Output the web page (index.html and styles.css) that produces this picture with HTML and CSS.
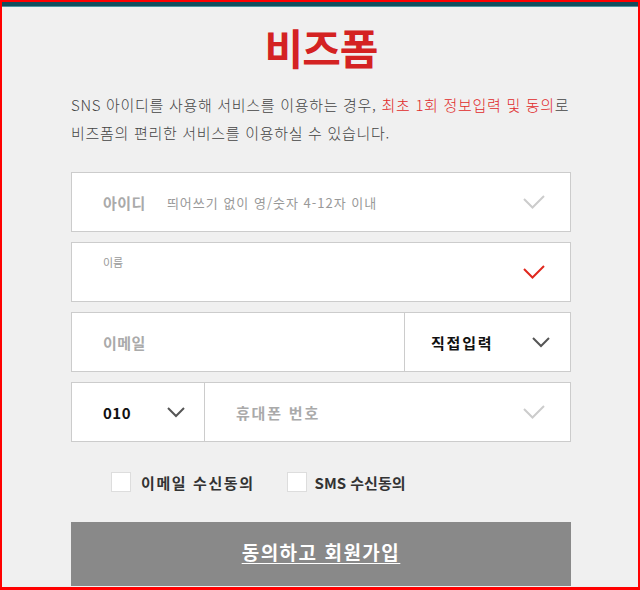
FILE: index.html
```html
<!DOCTYPE html>
<html lang="ko">
<head>
<meta charset="utf-8">
<title>비즈폼 회원가입</title>
<link rel="stylesheet" href="styles.css">
</head>
<body>
<div class="topbar"></div>
<main class="page">
  <h1 class="logo">비즈폼</h1>
  <p class="intro">
    <span class="line">SNS 아이디를 사용해 서비스를 이용하는 경우, <em>최초 1회 정보입력 및 동의</em>로</span>
    <span class="line">비즈폼의 편리한 서비스를 이용하실 수 있습니다.</span>
  </p>

  <div class="field">
    <span class="label">아이디</span>
    <span class="hint">띄어쓰기 없이 영/숫자 4-12자 이내</span>
    <svg class="check" width="22" height="15" viewBox="0 0 22 15"><path d="M1 4 L9.5 12.5 L21 1" fill="none" stroke="#cccccc" stroke-width="2"/></svg>
  </div>

  <div class="field field-filled">
    <span class="small-label">이름</span>
    <svg class="check" width="22" height="15" viewBox="0 0 22 15"><path d="M1 4 L9.5 12.5 L21 1" fill="none" stroke="#e0281e" stroke-width="2"/></svg>
  </div>

  <div class="field field-split">
    <div class="cell cell-email"><span class="label">이메일</span></div>
    <div class="cell cell-select">
      <span class="value wide">직접입력</span>
      <svg class="chev" width="18" height="11" viewBox="0 0 18 11"><path d="M1 1 L9 9 L17 1" fill="none" stroke="#555555" stroke-width="2"/></svg>
    </div>
  </div>

  <div class="field field-split">
    <div class="cell cell-prefix">
      <span class="value">010</span>
      <svg class="chev" width="18" height="11" viewBox="0 0 18 11"><path d="M1 1 L9 9 L17 1" fill="none" stroke="#555555" stroke-width="2"/></svg>
    </div>
    <div class="cell cell-phone">
      <span class="label spaced">휴대폰 번호</span>
      <svg class="check" width="22" height="15" viewBox="0 0 22 15"><path d="M1 4 L9.5 12.5 L21 1" fill="none" stroke="#cccccc" stroke-width="2"/></svg>
    </div>
  </div>

  <div class="agree">
    <label class="opt"><span class="box"></span><span class="opt-text">이메일 수신동의</span></label>
    <label class="opt"><span class="box"></span><span class="opt-text">SMS 수신동의</span></label>
  </div>

  <div class="submit"><span>동의하고 회원가입</span></div>
</main>
<div class="frame"></div>
</body>
</html>
```

FILE: styles.css
```css
html, body {
  margin: 0;
  padding: 0;
  height: 100%;
  overflow: hidden;
}
body {
  background: #f0f0f0;
  font-family: "Noto Sans CJK KR", "Noto Sans", sans-serif;
  color: #333;
}
.topbar {
  height: 6px;
  background: #124f5e;
  border-bottom: 1px solid #4d95a0;
}
.page {
  width: 500px;
  margin-left: 71px;
}
.logo {
  margin: 0;
  padding-top: 12px;
  height: 74px;
  box-sizing: border-box;
  text-align: center;
  font-size: 42px;
  line-height: 56px;
  font-weight: 700;
  color: #d42222;
  letter-spacing: -1px;
}
.intro {
  margin: 0;
  padding-top: 10px;
  font-size: 15px;
  line-height: 28px;
  font-weight: 300;
  color: #444;
  letter-spacing: 0.7px;
}
.intro .line {
  display: block;
  white-space: nowrap;
}
.intro em {
  font-style: normal;
  color: #e02a2a;
}
.field {
  margin-top: 10px;
  height: 60px;
  box-sizing: border-box;
  border: 1px solid #cccccc;
  background: #fff;
  display: flex;
  align-items: center;
  padding: 0 25px 0 31px;
}
.intro + .field {
  margin-top: 25px;
}
.label {
  font-size: 15px;
  font-weight: 700;
  color: #aaaaaa;
  letter-spacing: 0.5px;
}
.label.spaced {
  letter-spacing: 1.8px;
}
.hint {
  margin-left: 21px;
  font-size: 13px;
  color: #999;
  letter-spacing: 1px;
}
.check {
  margin-left: auto;
  display: block;
}
.field-filled {
  align-items: flex-start;
}
.small-label {
  font-size: 11px;
  color: #999;
  margin-top: 11px;
  line-height: 16px;
}
.field-filled .check {
  margin-top: 22px;
}
.field-split {
  padding: 0;
}
.cell {
  height: 100%;
  display: flex;
  align-items: center;
  box-sizing: border-box;
}
.cell-email {
  width: 333px;
  border-right: 1px solid #cccccc;
  padding-left: 31px;
}
.cell-select {
  flex: 1;
  padding: 0 20px 0 26px;
}
.cell-prefix {
  width: 133px;
  border-right: 1px solid #cccccc;
  padding: 0 19px 0 31px;
}
.cell-phone {
  flex: 1;
  padding: 0 25px 0 31px;
}
.value {
  font-size: 15px;
  font-weight: 700;
  color: #111;
  letter-spacing: 0.5px;
}
.value.wide {
  letter-spacing: 1.8px;
}
.chev {
  margin-left: auto;
  display: block;
}
.agree {
  display: flex;
  align-items: center;
  padding-left: 40px;
  margin-top: 30px;
  height: 20px;
}
.opt {
  display: flex;
  align-items: center;
  margin-right: 32px;
}
.box {
  width: 20px;
  height: 20px;
  box-sizing: border-box;
  border: 1px solid #dddddd;
  background: #fff;
}
.opt-text {
  margin-left: 10px;
  font-size: 15px;
  font-weight: 700;
  color: #333;
  letter-spacing: 1.6px;
}
.opt + .opt .opt-text {
  margin-left: 8px;
  letter-spacing: 0px;
}
.submit {
  margin-top: 30px;
  height: 64px;
  background: #898989;
  display: flex;
  justify-content: center;
  padding-top: 17px;
  box-sizing: border-box;
}
.submit span {
  color: #fff;
  font-size: 19px;
  font-weight: 700;
  text-decoration: underline;
  text-underline-offset: 3px;
  line-height: 26px;
  letter-spacing: 1.5px;
}
.frame {
  position: fixed;
  inset: 0;
  border: 2px solid #ff0000;
  border-bottom-width: 3px;
  pointer-events: none;
}
```
